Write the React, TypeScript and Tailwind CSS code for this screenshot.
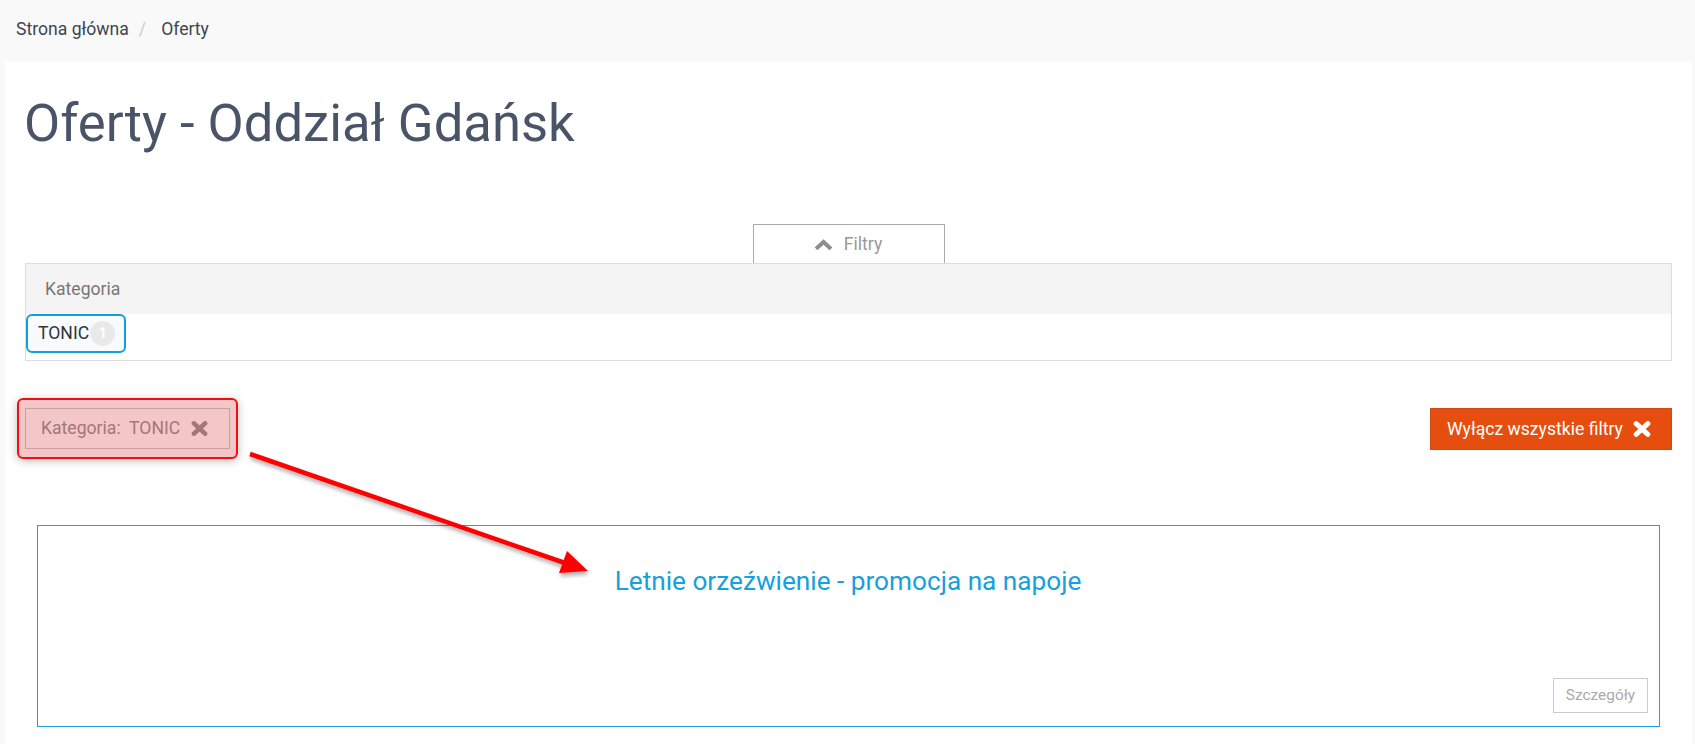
const HeavyX = ({ w, h, className }: { w: number; h: number; className?: string }) => (
  <svg width={w} height={h} viewBox="0 0 16 14" className={className}>
    <path d="M2.8 2.2 L13.2 11.8 M13.2 2.2 L2.8 11.8" stroke="currentColor" strokeWidth="4.4" strokeLinecap="round" fill="none" />
  </svg>
);

const ChevronUp = () => (
  <svg width="17" height="11" viewBox="0 0 17 11" className="text-[#8e8e8e]">
    <path d="M2.5 8.5 L8.5 3 L14.5 8.5" stroke="currentColor" strokeWidth="4" strokeLinecap="square" strokeLinejoin="miter" fill="none" />
  </svg>
);

export default function App() {
  return (
    <div className="relative min-h-screen bg-[#f9f9f9] font-['Roboto',sans-serif] text-[17.6px]">
      {/* Breadcrumb */}
      <nav className="h-[61px] flex items-center pl-[16px] pb-[2px] text-[#3e4551]">
        <span>Strona główna</span>
        <span className="pl-[10px] pr-[15px] text-[#ccc]">/</span>
        <span>Oferty</span>
      </nav>

      {/* Main panel */}
      <div className="ml-[5px] mr-[3px] bg-white px-[20px] pt-[31px] pb-[20px]">
        <h1 className="text-[52.6px] leading-[1.2] text-[#4a5469] -ml-[1px]">Oferty - Oddział Gdańsk</h1>

        {/* Filters */}
        <div className="mt-[69px] flex justify-center">
          <button className="w-[192px] h-[39px] border border-b-0 border-[#aaa] flex items-center justify-center gap-[12px] text-[#999]">
            <ChevronUp />
            <span>Filtry</span>
          </button>
        </div>
        <div className="border border-[#ddd]">
          <div className="h-[50px] bg-[#f4f4f4] flex items-center pl-[19px] text-[#777]">Kategoria</div>
          <div className="pb-[7px]">
            <div className="inline-flex items-center h-[39px] w-[100px] border-2 border-[#0ea0dc] rounded-[6px] bg-[#f7fbfd] pl-[10px] text-[#333]">
              <span>TONIC</span>
              <span className="ml-[1px] w-[25px] h-[25px] rounded-full bg-[#e9e9e9] text-white text-[14px] font-bold flex items-center justify-center">1</span>
            </div>
          </div>
        </div>

        {/* Active filters */}
        <div className="mt-[47px] flex justify-between items-start">
          <div className="relative">
            <div className="h-[41px] w-[205px] border border-[#ccc] flex items-center pl-[15px] text-[#999]">
              <span>Kategoria:&nbsp; TONIC</span>
              <HeavyX w={17} h={15} className="ml-[11px]" />
            </div>
            <div className="absolute -left-[8px] -right-[8px] -top-[10px] -bottom-[10px] rounded-[6px] border-2 border-[#ee1111] bg-[rgba(200,0,0,0.22)] shadow-[0_2px_10px_rgba(0,0,0,0.25)]" />
          </div>
          <button className="h-[42px] w-[242px] bg-[#e64e0f] border border-[#d24a12] text-white flex items-center pl-[16px]">
            <span>Wyłącz wszystkie filtry</span>
            <HeavyX w={18} h={16} className="ml-[10px]" />
          </button>
        </div>

        {/* Offer card */}
        <div className="mt-[75px] mx-[12px] h-[202px] border border-[#1ba1dc] flex flex-col pt-[40px] pb-[13px] pl-[10px] pr-[11px]">
          <h2 className="text-[26.2px] leading-[1.2] text-[#16a0dc] text-center">Letnie orzeźwienie - promocja na napoje</h2>
          <button className="mt-auto self-end w-[95px] h-[35px] border border-[#ccc] text-[#aaa] text-[15.4px]">Szczegóły</button>
        </div>
      </div>

      {/* Annotation arrow */}
      <svg className="absolute left-[240px] top-[440px] pointer-events-none" width="370" height="150" viewBox="0 0 370 150">
        <defs>
          <filter id="sh" x="-10%" y="-20%" width="120%" height="140%">
            <feDropShadow dx="1" dy="3" stdDeviation="2" floodColor="#000" floodOpacity="0.35" />
          </filter>
        </defs>
        <g filter="url(#sh)">
          <line x1="10" y1="14" x2="325" y2="123" stroke="#ff0000" strokeWidth="4.5" />
          <polygon points="348,131 319,133 327,111" fill="#ff0000" />
        </g>
      </svg>
    </div>
  );
}
